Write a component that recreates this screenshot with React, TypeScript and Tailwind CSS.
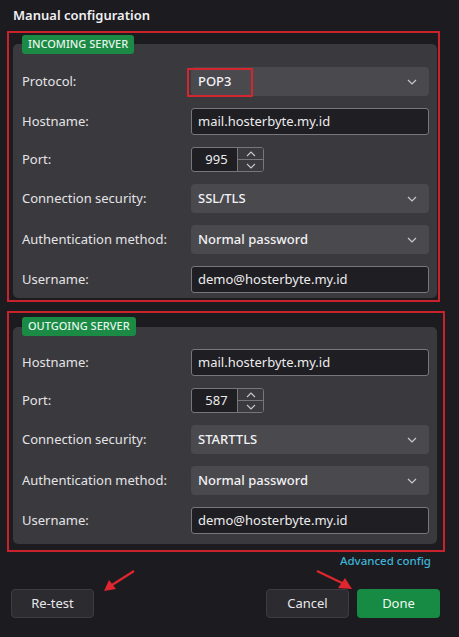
import React from "react";

const font = { fontFamily: '"Noto Sans", "Open Sans", sans-serif' };

function Chevron() {
  return (
    <svg width="10" height="6" viewBox="0 0 10 6" className="shrink-0">
      <path d="M1 1 L5 5 L9 1" fill="none" stroke="#c9c8cc" strokeWidth="1.2" />
    </svg>
  );
}

function Select({ value, highlight }: { value: string; highlight?: boolean }) {
  return (
    <div className="relative h-[29px] w-[238px] rounded-[4px] bg-[#4a494e] flex items-center justify-between pl-[7px] pr-[12px]">
      <span className="text-[13px] font-medium text-[#f2f2f4]">{value}</span>
      <Chevron />
      {highlight && (
        <div className="absolute left-[-4px] top-[1px] w-[66px] h-[29px] border-2 border-[#d4262f] rounded-[1px]" />
      )}
    </div>
  );
}

function Input({ value }: { value: string }) {
  return (
    <div className="w-[238px] h-[27px] rounded-[3px] bg-[#1f1e22] border border-[#77767c] flex items-center pl-[6px]">
      <span className="text-[13px] text-[#ececee]">{value}</span>
    </div>
  );
}

function Spinner({ value }: { value: string }) {
  return (
    <div className="h-[25px] w-[73px] flex rounded-[3px] border border-[#77767c] bg-[#1f1e22] overflow-hidden">
      <div className="w-[45px] flex items-center justify-center">
        <span className="text-[13px] text-[#ececee] pl-[4px]">{value}</span>
      </div>
      <div className="flex-1 flex flex-col border-l border-[#77767c] bg-[#3b3a3f]">
        <div className="flex-1 flex items-center justify-center border-b border-[#77767c]">
          <svg width="10" height="6" viewBox="0 0 10 6">
            <path d="M1 5 L5 1 L9 5" fill="none" stroke="#c9c8cc" strokeWidth="1.1" />
          </svg>
        </div>
        <div className="flex-1 flex items-center justify-center">
          <svg width="10" height="6" viewBox="0 0 10 6">
            <path d="M1 1 L5 5 L9 1" fill="none" stroke="#c9c8cc" strokeWidth="1.1" />
          </svg>
        </div>
      </div>
    </div>
  );
}

function Row({ label, children }: { label: string; children: React.ReactNode }) {
  return (
    <div className="flex items-center">
      <div className="w-[169px] text-[13px] text-[#e4e4e6]">{label}</div>
      {children}
    </div>
  );
}

function Badge({ text }: { text: string }) {
  return (
    <div className="relative z-10 ml-[9px] self-start h-[19px] px-[6px] rounded-[3px] bg-[#1a8a45] flex items-center">
      <span className="text-[11px] font-medium text-[#e6f5ea]">{text}</span>
    </div>
  );
}

export default function App() {
  return (
    <div className="w-[459px] h-[637px] bg-[#1c1b1f] relative overflow-hidden" style={font}>
      <div className="pl-[13px] pt-[2px] h-[31px]">
        <span className="text-[13px] font-semibold text-[#f0f0f2]">Manual configuration</span>
      </div>

      {/* Incoming */}
      <div className="ml-[7px] w-[433px] border-2 border-[#c9222c] pt-[2px] pl-[4px] pr-[1px] pb-[2px] flex flex-col">
        <Badge text="INCOMING SERVER" />
        <div className="-mt-[10px] rounded-[5px] bg-[#3a393e] pt-[23px] pb-[5px] pl-[9px] pr-[8px] flex flex-col gap-[12px]">
          <Row label="Protocol:">
            <Select value="POP3" highlight />
          </Row>
          <Row label="Hostname:">
            <Input value="mail.hosterbyte.my.id" />
          </Row>
          <Row label="Port:">
            <Spinner value="995" />
          </Row>
          <Row label="Connection security:">
            <Select value="SSL/TLS" />
          </Row>
          <Row label="Authentication method:">
            <Select value="Normal password" />
          </Row>
          <Row label="Username:">
            <Input value="demo@hosterbyte.my.id" />
          </Row>
        </div>
      </div>

      {/* Outgoing */}
      <div className="mt-[9px] ml-[7px] w-[438px] border-2 border-[#c9222c] pt-[4px] pl-[4px] pr-[6px] pb-[6px] flex flex-col">
        <Badge text="OUTGOING SERVER" />
        <div className="-mt-[9px] rounded-[5px] bg-[#3a393e] pt-[22px] pb-[10px] pl-[9px] pr-[8px] flex flex-col gap-[12px]">
          <Row label="Hostname:">
            <Input value="mail.hosterbyte.my.id" />
          </Row>
          <Row label="Port:">
            <Spinner value="587" />
          </Row>
          <Row label="Connection security:">
            <Select value="STARTTLS" />
          </Row>
          <Row label="Authentication method:">
            <Select value="Normal password" />
          </Row>
          <Row label="Username:">
            <Input value="demo@hosterbyte.my.id" />
          </Row>
        </div>
      </div>

      <div className="flex justify-end pr-[28px] h-[17px] items-center">
        <span className="text-[11.5px] font-medium text-[#3db4d6]">Advanced config</span>
      </div>

      <div className="mt-[20px] px-[11px] pr-[19px] flex items-center">
        <button className="w-[83px] h-[29px] rounded-[4px] bg-[#2c2b30] border border-[#3d3c42] text-[13px] text-[#e8e8ea]">
          Re-test
        </button>
        <div className="flex-1" />
        <button className="w-[83px] h-[29px] rounded-[4px] bg-[#2c2b30] border border-[#3d3c42] text-[13px] text-[#e8e8ea]">
          Cancel
        </button>
        <button className="ml-[8px] w-[83px] h-[29px] rounded-[4px] bg-[#178a44] text-[13px] text-[#eef8f1]">
          Done
        </button>
      </div>

      {/* annotation arrows */}
      <svg className="absolute left-0 top-0 pointer-events-none" width="459" height="637">
        <line x1="134" y1="571" x2="112" y2="585" stroke="#e0262e" strokeWidth="2.2" />
        <polygon points="104,591 109,580 116,589" fill="#e0262e" />
        <line x1="317" y1="571" x2="342" y2="583" stroke="#e0262e" strokeWidth="2.2" />
        <polygon points="352,589 338,588 345,578" fill="#e0262e" />
      </svg>
    </div>
  );
}
